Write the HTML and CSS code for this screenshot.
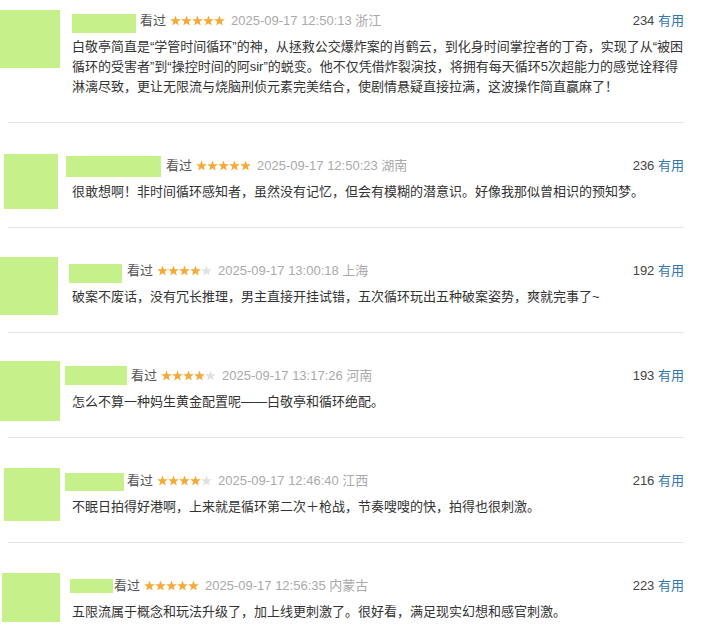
FILE: index.html
```html
<!DOCTYPE html>
<html lang="zh-CN">
    <head>
        <meta charset="UTF-8">
        <meta name="viewport" content="width=device-width, initial-scale=1.0">
        <title>短评</title>
        <link rel="stylesheet" href="styles.css">
    </head>
    <body>
        <svg class="defs" width="0" height="0" aria-hidden="true">
            <symbol id="star" viewBox="0 0 11 11">
                <polygon points="5.5,0.4 6.85,4.14 10.83,4.27 7.69,6.71 8.79,10.53 5.5,8.3 2.21,10.53 3.31,6.71 0.17,4.27 4.15,4.14"/>
            </symbol>
        </svg>

        <ul class="comments">
            <li class="comment c1">
                <div class="comment-main">
                    <div class="avatar-col"><div class="avatar"></div></div>
                    <div class="comment-body">
                        <div class="info">
                            <span class="name-mask"></span>
                            <span class="watched">看过</span>
                            <svg class="stars" viewBox="0 0 55 11">
                                <use href="#star" x="0" width="11" height="11" class="on"/>
                                <use href="#star" x="11" width="11" height="11" class="on"/>
                                <use href="#star" x="22" width="11" height="11" class="on"/>
                                <use href="#star" x="33" width="11" height="11" class="on"/>
                                <use href="#star" x="44" width="11" height="11" class="on"/>
                            </svg>
                            <span class="time">2025-09-17 12:50:13 浙江</span>
                            <span class="votes"><span class="count">234</span> <a class="useful">有用</a></span>
                        </div>
                        <p class="text">白敬亭简直是“学管时间循环”的神，从拯救公交爆炸案的肖鹤云，到化身时间掌控者的丁奇，实现了从“被困循环的受害者”到“操控时间的阿sir”的蜕变。他不仅凭借炸裂演技，将拥有每天循环5次超能力的感觉诠释得淋漓尽致，更让无限流与烧脑刑侦元素完美结合，使剧情悬疑直接拉满，这波操作简直赢麻了！</p>
                    </div>
                </div>
            </li>

            <li class="comment c2">
                <div class="comment-main">
                    <div class="avatar-col"><div class="avatar"></div></div>
                    <div class="comment-body">
                        <div class="info">
                            <span class="name-mask"></span>
                            <span class="watched">看过</span>
                            <svg class="stars" viewBox="0 0 55 11">
                                <use href="#star" x="0" width="11" height="11" class="on"/>
                                <use href="#star" x="11" width="11" height="11" class="on"/>
                                <use href="#star" x="22" width="11" height="11" class="on"/>
                                <use href="#star" x="33" width="11" height="11" class="on"/>
                                <use href="#star" x="44" width="11" height="11" class="on"/>
                            </svg>
                            <span class="time">2025-09-17 12:50:23 湖南</span>
                            <span class="votes"><span class="count">236</span> <a class="useful">有用</a></span>
                        </div>
                        <p class="text">很敢想啊！非时间循环感知者，虽然没有记忆，但会有模糊的潜意识。好像我那似曾相识的预知梦。</p>
                    </div>
                </div>
            </li>

            <li class="comment c3">
                <div class="comment-main">
                    <div class="avatar-col"><div class="avatar"></div></div>
                    <div class="comment-body">
                        <div class="info">
                            <span class="name-mask"></span>
                            <span class="watched">看过</span>
                            <svg class="stars" viewBox="0 0 55 11">
                                <use href="#star" x="0" width="11" height="11" class="on"/>
                                <use href="#star" x="11" width="11" height="11" class="on"/>
                                <use href="#star" x="22" width="11" height="11" class="on"/>
                                <use href="#star" x="33" width="11" height="11" class="on"/>
                                <use href="#star" x="44" width="11" height="11" class="off"/>
                            </svg>
                            <span class="time">2025-09-17 13:00:18 上海</span>
                            <span class="votes"><span class="count">192</span> <a class="useful">有用</a></span>
                        </div>
                        <p class="text">破案不废话，没有冗长推理，男主直接开挂试错，五次循环玩出五种破案姿势，爽就完事了~</p>
                    </div>
                </div>
            </li>

            <li class="comment c4">
                <div class="comment-main">
                    <div class="avatar-col"><div class="avatar"></div></div>
                    <div class="comment-body">
                        <div class="info">
                            <span class="name-mask"></span>
                            <span class="watched">看过</span>
                            <svg class="stars" viewBox="0 0 55 11">
                                <use href="#star" x="0" width="11" height="11" class="on"/>
                                <use href="#star" x="11" width="11" height="11" class="on"/>
                                <use href="#star" x="22" width="11" height="11" class="on"/>
                                <use href="#star" x="33" width="11" height="11" class="on"/>
                                <use href="#star" x="44" width="11" height="11" class="off"/>
                            </svg>
                            <span class="time">2025-09-17 13:17:26 河南</span>
                            <span class="votes"><span class="count">193</span> <a class="useful">有用</a></span>
                        </div>
                        <p class="text">怎么不算一种妈生黄金配置呢——白敬亭和循环绝配。</p>
                    </div>
                </div>
            </li>

            <li class="comment c5">
                <div class="comment-main">
                    <div class="avatar-col"><div class="avatar"></div></div>
                    <div class="comment-body">
                        <div class="info">
                            <span class="name-mask"></span>
                            <span class="watched">看过</span>
                            <svg class="stars" viewBox="0 0 55 11">
                                <use href="#star" x="0" width="11" height="11" class="on"/>
                                <use href="#star" x="11" width="11" height="11" class="on"/>
                                <use href="#star" x="22" width="11" height="11" class="on"/>
                                <use href="#star" x="33" width="11" height="11" class="on"/>
                                <use href="#star" x="44" width="11" height="11" class="off"/>
                            </svg>
                            <span class="time">2025-09-17 12:46:40 江西</span>
                            <span class="votes"><span class="count">216</span> <a class="useful">有用</a></span>
                        </div>
                        <p class="text">不眠日拍得好港啊，上来就是循环第二次＋枪战，节奏嗖嗖的快，拍得也很刺激。</p>
                    </div>
                </div>
            </li>

            <li class="comment c6">
                <div class="comment-main">
                    <div class="avatar-col"><div class="avatar"></div></div>
                    <div class="comment-body">
                        <div class="info">
                            <span class="name-mask"></span>
                            <span class="watched">看过</span>
                            <svg class="stars" viewBox="0 0 55 11">
                                <use href="#star" x="0" width="11" height="11" class="on"/>
                                <use href="#star" x="11" width="11" height="11" class="on"/>
                                <use href="#star" x="22" width="11" height="11" class="on"/>
                                <use href="#star" x="33" width="11" height="11" class="on"/>
                                <use href="#star" x="44" width="11" height="11" class="on"/>
                            </svg>
                            <span class="time">2025-09-17 12:56:35 内蒙古</span>
                            <span class="votes"><span class="count">223</span> <a class="useful">有用</a></span>
                        </div>
                        <p class="text">五限流属于概念和玩法升级了，加上线更刺激了。很好看，满足现实幻想和感官刺激。</p>
                    </div>
                </div>
            </li>
        </ul>
    </body>
</html>
```

FILE: styles.css
```css
:root{
    --mask: #c6f08a;
    --text: #333;
    --muted: #aaa;
    --link: #37a;
    --star: #f6a935;
    --star-off: #e1e1e1;
    --line: #e6e6e6;
}
body{
    font-family: "Liberation Sans", "Noto Sans CJK SC", sans-serif;
    font-size: 13px;
    color: var(--text);
    background: #fff;
    margin: 0;
    padding: 0;
}
.defs{
    position: absolute;
    width: 0;
    height: 0;
    overflow: hidden;
}

.comments{
    list-style: none;
    margin: 0;
    padding: 0;
}
.comment{
    padding-top: 33px;

    &:first-child{
        padding-top: 11px;
    }
    &::after{
        content: "";
        display: block;
        border-top: 1px solid var(--line);
        margin: 25px 17px 0 8px;
    }
    &:last-child::after{
        display: none;
    }
}
.comment-main{
    display: flex;
    align-items: flex-start;
}
/* the cover block hangs over the row, it doesn't set its height */
.avatar-col{
    width: 72px;
    height: 0;
    flex: none;
}
.avatar{
    background: var(--mask);
}
.comment-body{
    width: 613px;
    flex: none;
}

.info{
    display: flex;
    align-items: flex-start;
    height: 20px;
    line-height: 20px;
    white-space: nowrap;
}
.name-mask{
    display: block;
    background: var(--mask);
    margin-right: 4px;
}
.watched{
    color: #555;
}
.stars{
    width: 55px;
    height: 11px;
    margin: 4px 6px 0 4px;

    .on{ fill: var(--star); }
    .off{ fill: var(--star-off); }
}
.time{
    color: var(--muted);
}
.votes{
    margin-left: auto;
    margin-right: 1px;

    .count{ color: #444; }
    .useful{ color: var(--link); }
}
.text{
    margin: 6px 0 0;
    line-height: 20px;
}

/* the hand-drawn covers differ a little per row */
.c1{
    .avatar{ width: 60px; height: 58px; margin-top: -1px; }
    .name-mask{ width: 64px; height: 19px; margin-top: 3px; }
}
.c2{
    .avatar{ width: 54px; height: 55px; margin: -2px 0 0 4px; }
    .name-mask{ width: 95px; height: 21px; margin-left: -6px; margin-right: 5px; }
}
.c3{
    .avatar{ width: 58px; height: 58px; margin-top: -4px; }
    .name-mask{ width: 53px; height: 19px; margin-top: 3px; margin-left: -3px; margin-right: 5px; }
}
.c4{
    .avatar{ width: 60px; height: 60px; margin-top: -5px; }
    .name-mask{ width: 62px; height: 19px; margin-left: -7px; }
}
.c5{
    .avatar{ width: 56px; height: 53px; margin: -3px 0 0 4px; }
    .name-mask{ width: 59px; height: 18px; margin-top: 2px; margin-left: -7px; margin-right: 3px; }
}
.c6{
    .avatar{ width: 58px; height: 54px; margin: -3px 0 0 2px; }
    .name-mask{ width: 43px; height: 14px; margin-top: 3px; margin-left: -2px; margin-right: 1px; }
}
```
